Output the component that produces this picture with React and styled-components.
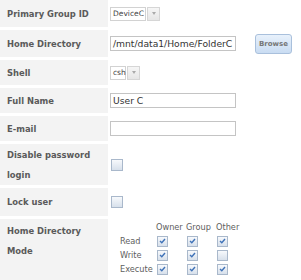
import React from 'react';
import styled, { createGlobalStyle } from 'styled-components';

const Global = createGlobalStyle`
  body {
    margin: 0;
    background: #fff;
    font-family: 'DejaVu Sans', Verdana, sans-serif;
  }
`;

const Form = styled.div`
  display: grid;
  grid-template-columns: 108px 1fr;
  row-gap: 3px;
  width: 301px;
`;

const Label = styled.div`
  display: flex;
  align-items: ${(props) => (props.top ? 'flex-start' : 'center')};
  height: ${(props) => props.h}px;
  padding: ${(props) => (props.top ? '2px 4px 0 7px' : '0 4px 0 7px')};
  box-sizing: border-box;
  background: #f3f3f3;
  color: #5a5a5a;
  font-size: 8.4px;
  font-weight: bold;
  line-height: 20px;
`;

const Field = styled.div`
  display: flex;
  align-items: ${(props) => (props.top ? 'flex-start' : 'center')};
  gap: 19px;
  padding-left: ${(props) => props.pad || 2}px;
  height: ${(props) => props.h}px;
`;

const Input = styled.div`
  width: 126px;
  height: 15px;
  box-sizing: border-box;
  border: 1px solid #c4c4c4;
  background: #fff;
  color: #333;
  font-size: 9.2px;
  line-height: 13px;
  padding-left: 2px;
  white-space: nowrap;
  overflow: hidden;
`;

const Select = styled.div`
  display: flex;
  gap: 1px;
  height: 14px;
`;

const SelectValue = styled.div`
  width: ${(props) => props.w}px;
  box-sizing: border-box;
  border: 1px solid #d2d2d2;
  background: #fff;
  color: #444;
  font-size: 7.5px;
  line-height: 12px;
  padding-left: 2px;
`;

const SelectArrow = styled.div`
  width: 13px;
  box-sizing: border-box;
  border: 1px solid #d6d6d6;
  background: linear-gradient(#f6f6f6, #e6e6e6);
  display: flex;
  align-items: center;
  justify-content: center;
  &::after {
    content: '';
    border-left: 2.5px solid transparent;
    border-right: 2.5px solid transparent;
    border-top: 3px solid #aaa;
  }
`;

const Button = styled.div`
  width: 37px;
  height: 20px;
  box-sizing: border-box;
  border: 1px solid #a9c0dc;
  border-radius: 3px;
  background: linear-gradient(#e8f1fb, #c9dcf2);
  color: #777;
  font-size: 7px;
  font-weight: bold;
  display: flex;
  align-items: center;
  justify-content: center;
`;

const Box = styled.div`
  width: ${(props) => props.s}px;
  height: ${(props) => props.s}px;
  box-sizing: border-box;
  border: 1px solid #a9b8cb;
  background: linear-gradient(#f7f9fc, #d7e0eb);
  display: flex;
  align-items: center;
  justify-content: center;
`;

const Check = ({ on, s = 11 }) => (
  <Box s={s}>
    {on && (
      <svg width="7" height="6" viewBox="0 0 7 6">
        <path d="M1 3 L2.8 4.8 L6 1" fill="none" stroke="#3f72b8" strokeWidth="1.4" />
      </svg>
    )}
  </Box>
);

const Perms = styled.div`
  display: grid;
  grid-template-columns: 37px 30px 30px 30px;
  grid-auto-rows: 14px;
  align-items: center;
  margin-top: 1px;
  color: #5e5e5e;
  font-size: 8.2px;
`;

const Head = styled.span`
  margin-left: -1px;
`;

const perms = [
  ['Read', true, true, true],
  ['Write', true, true, false],
  ['Execute', true, true, true],
];

export default function App() {
  return (
    <>
      <Global />
      <Form>
        <Label h={27}>Primary Group ID</Label>
        <Field h={27}>
          <Select>
            <SelectValue w={36}>DeviceC</SelectValue>
            <SelectArrow />
          </Select>
        </Field>

        <Label h={27}>Home Directory</Label>
        <Field h={27}>
          <Input>/mnt/data1/Home/FolderC</Input>
          <Button>Browse</Button>
        </Field>

        <Label h={25}>Shell</Label>
        <Field h={25}>
          <Select>
            <SelectValue w={16}>csh</SelectValue>
            <SelectArrow />
          </Select>
        </Field>

        <Label h={25}>Full Name</Label>
        <Field h={25}>
          <Input>User C</Input>
        </Field>

        <Label h={25}>E-mail</Label>
        <Field h={25}>
          <Input />
        </Field>

        <Label h={41}>Disable password login</Label>
        <Field h={41} pad={3}>
          <Check s={12} />
        </Field>

        <Label h={28}>Lock user</Label>
        <Field h={28} pad={3}>
          <Check s={12} />
        </Field>

        <Label h={62} top>Home Directory Mode</Label>
        <Field h={62} top pad={12}>
          <Perms>
            <span />
            <Head>Owner</Head>
            <Head>Group</Head>
            <Head>Other</Head>
            {perms.map(([name, a, b, c]) => (
              <React.Fragment key={name}>
                <span>{name}</span>
                <Check on={a} />
                <Check on={b} />
                <Check on={c} />
              </React.Fragment>
            ))}
          </Perms>
        </Field>
      </Form>
    </>
  );
}
